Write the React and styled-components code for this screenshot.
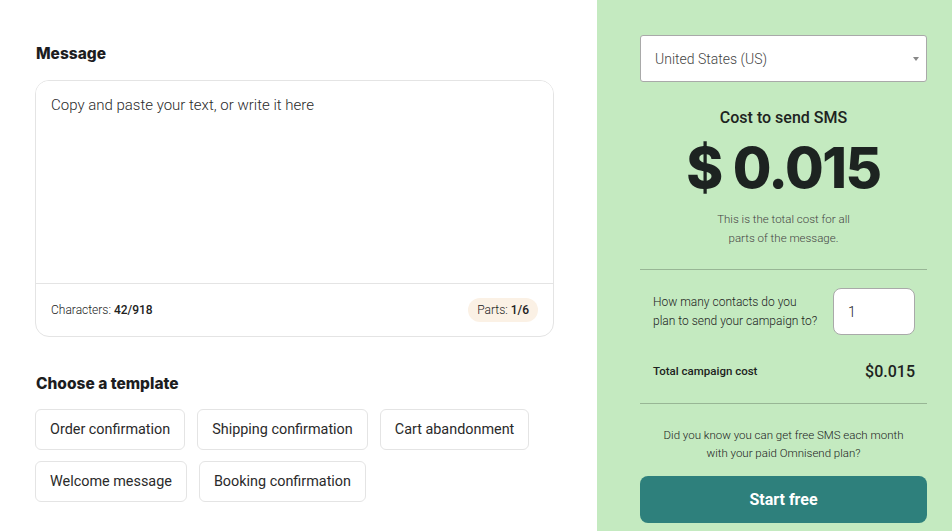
import React, { useState } from "react";
import styled, { createGlobalStyle } from "styled-components";

const GlobalStyle = createGlobalStyle`
  html, body {
    margin: 0;
    padding: 0;
    background: #ffffff;
    font-family: Roboto, "Noto Sans", sans-serif;
    color: #222;
  }
  * { box-sizing: border-box; }
`;

const TEMPLATES = [
  ["Order confirmation", "Shipping confirmation", "Cart abandonment"],
  ["Welcome message", "Booking confirmation"],
];

const App = () => {
  const [message, setMessage] = useState("");
  const [contacts, setContacts] = useState("1");
  const total = (0.015 * (parseInt(contacts, 10) || 0)).toFixed(3);

  return (
    <>
      <GlobalStyle />
      <Page>
        <Editor>
          <Heading>Message</Heading>
          <MessageBox>
            <MessageInput
              value={message}
              onChange={(e) => setMessage(e.target.value)}
              placeholder="Copy and paste your text, or write it here"
            />
            <MessageFooter>
              <Counter>
                Characters: <b>42/918</b>
              </Counter>
              <PartsPill>
                Parts: <b>1/6</b>
              </PartsPill>
            </MessageFooter>
          </MessageBox>

          <Heading $top={37}>Choose a template</Heading>
          <TemplateRows>
            {TEMPLATES.map((row, i) => (
              <TemplateRow key={i}>
                {row.map((name) => (
                  <TemplateButton key={name}>{name}</TemplateButton>
                ))}
              </TemplateRow>
            ))}
          </TemplateRows>
        </Editor>

        <Calculator>
          <SelectWrap>
            <CountrySelect defaultValue="us">
              <option value="us">United States (US)</option>
              <option value="gb">United Kingdom (UK)</option>
              <option value="ca">Canada (CA)</option>
            </CountrySelect>
            <SelectArrow />
          </SelectWrap>

          <CostTitle>Cost to send SMS</CostTitle>
          <CostValue>$ 0.015</CostValue>
          <CostNote>
            This is the total cost for all
            <br />
            parts of the message.
          </CostNote>

          <Divider />

          <ContactsRow>
            <ContactsLabel>
              How many contacts do you
              <br />
              plan to send your campaign to?
            </ContactsLabel>
            <ContactsInput
              value={contacts}
              onChange={(e) => setContacts(e.target.value)}
            />
          </ContactsRow>

          <TotalRow>
            <TotalLabel>Total campaign cost</TotalLabel>
            <TotalValue>${total}</TotalValue>
          </TotalRow>

          <Divider />

          <PromoNote>
            Did you know you can get free SMS each month
            <br />
            with your paid Omnisend plan?
          </PromoNote>
          <StartButton>Start free</StartButton>
        </Calculator>
      </Page>
    </>
  );
};

const Page = styled.div`
  display: flex;
  width: 952px;
  height: 531px;
  overflow: hidden;
`;

const Editor = styled.div`
  width: 597px;
  flex-shrink: 0;
  padding: 44px 43px 0 35px;
  background: #ffffff;
`;

const Heading = styled.h2`
  margin: ${({ $top }) => ($top || 0)}px 0 0 1px;
  font-family: Inter, "Noto Sans", sans-serif;
  font-size: 15.5px;
  font-weight: 800;
  letter-spacing: 0;
  line-height: 20px;
  color: #1d1d1f;
`;

const MessageBox = styled.div`
  margin-top: 16px;
  height: 257px;
  border: 1px solid #e4e4e4;
  border-radius: 14px;
  display: flex;
  flex-direction: column;
  overflow: hidden;
`;

const MessageInput = styled.textarea`
  flex: 1;
  border: none;
  outline: none;
  resize: none;
  padding: 14px 15px;
  font-family: Roboto, "Noto Sans", sans-serif;
  font-size: 15px;
  font-weight: 300;
  line-height: 20px;
  color: #222;

  &::placeholder {
    color: #2a2a2a;
  }
`;

const MessageFooter = styled.div`
  height: 53px;
  border-top: 1px solid #e4e4e4;
  display: flex;
  align-items: center;
  justify-content: space-between;
  padding: 0 15px;
`;

const Counter = styled.span`
  font-size: 12px;
  font-weight: 300;
  color: #222;

  b {
    font-weight: 500;
  }
`;

const PartsPill = styled.span`
  background: #fbf1e5;
  border-radius: 12px;
  padding: 5px 9px;
  font-size: 12px;
  font-weight: 300;
  color: #222;

  b {
    font-weight: 500;
  }
`;

const TemplateRows = styled.div`
  margin-top: 15px;
  display: flex;
  flex-direction: column;
  gap: 11px;
`;

const TemplateRow = styled.div`
  display: flex;
  gap: 12px;
`;

const TemplateButton = styled.button`
  height: 41px;
  padding: 0 14px;
  background: #ffffff;
  border: 1px solid #e4e4e4;
  border-radius: 6px;
  font-family: Roboto, "Noto Sans", sans-serif;
  font-size: 14.4px;
  font-weight: 400;
  color: #2a2a2a;
  cursor: pointer;

  &:hover {
    border-color: #c9c9c9;
  }
`;

const Calculator = styled.div`
  flex: 1;
  background: #c4eac0;
  padding: 35px 25px 0 43px;
  display: flex;
  flex-direction: column;
  align-items: stretch;
`;

const SelectWrap = styled.div`
  position: relative;
`;

const CountrySelect = styled.select`
  width: 100%;
  height: 47px;
  appearance: none;
  background: #ffffff;
  border: 1px solid #a9a9a9;
  border-radius: 3px;
  padding: 0 14px;
  font-family: Roboto, "Noto Sans", sans-serif;
  font-size: 14px;
  font-weight: 300;
  color: #444;
  outline: none;
`;

const SelectArrow = styled.span`
  position: absolute;
  right: 8px;
  top: 22px;
  width: 0;
  height: 0;
  border-left: 3px solid transparent;
  border-right: 3px solid transparent;
  border-top: 4px solid #888;
  pointer-events: none;
`;

const CostTitle = styled.div`
  margin-top: 26px;
  text-align: center;
  font-size: 16px;
  font-weight: 500;
  line-height: 20px;
  color: #1d2321;
`;

const CostValue = styled.div`
  margin-top: 9px;
  text-align: center;
  font-family: Inter, "Noto Sans", sans-serif;
  font-size: 56px;
  font-weight: 800;
  letter-spacing: -1.4px;
  line-height: 62px;
  color: #1d2321;
`;

const CostNote = styled.div`
  margin: 11px 0 21px;
  text-align: center;
  font-size: 11.5px;
  font-weight: 300;
  line-height: 19px;
  color: #444;
`;

const Divider = styled.hr`
  width: 100%;
  margin: 0;
  border: none;
  border-top: 1px solid #98b695;
`;

const ContactsRow = styled.div`
  margin-top: 18px;
  display: flex;
  align-items: center;
  justify-content: space-between;
  padding: 0 12px 0 13px;
`;

const ContactsLabel = styled.div`
  font-size: 12px;
  font-weight: 300;
  line-height: 19px;
  color: #222;
`;

const ContactsInput = styled.input`
  width: 82px;
  height: 47px;
  background: #ffffff;
  border: 1px solid #a9a9a9;
  border-radius: 8px;
  padding: 0 14px;
  font-family: Roboto, "Noto Sans", sans-serif;
  font-size: 14px;
  font-weight: 300;
  color: #222;
  outline: none;
`;

const TotalRow = styled.div`
  display: flex;
  align-items: center;
  justify-content: space-between;
  padding: 0 12px 0 13px;
  margin: 24px 0 20px;
  height: 24px;
`;

const TotalLabel = styled.span`
  font-size: 11.5px;
  font-weight: 500;
  color: #1d2321;
`;

const TotalValue = styled.span`
  font-size: 16px;
  font-weight: 500;
  color: #1d2321;
`;

const PromoNote = styled.div`
  margin-top: 22px;
  text-align: center;
  font-size: 11.5px;
  font-weight: 300;
  line-height: 18px;
  color: #222;
`;

const StartButton = styled.button`
  margin-top: 14px;
  height: 47px;
  width: 100%;
  background: #2e807c;
  border: none;
  border-radius: 8px;
  font-family: Roboto, "Noto Sans", sans-serif;
  font-size: 16px;
  font-weight: 700;
  color: #ffffff;
  cursor: pointer;

  &:hover {
    background: #276f6c;
  }
`;

export default App;
